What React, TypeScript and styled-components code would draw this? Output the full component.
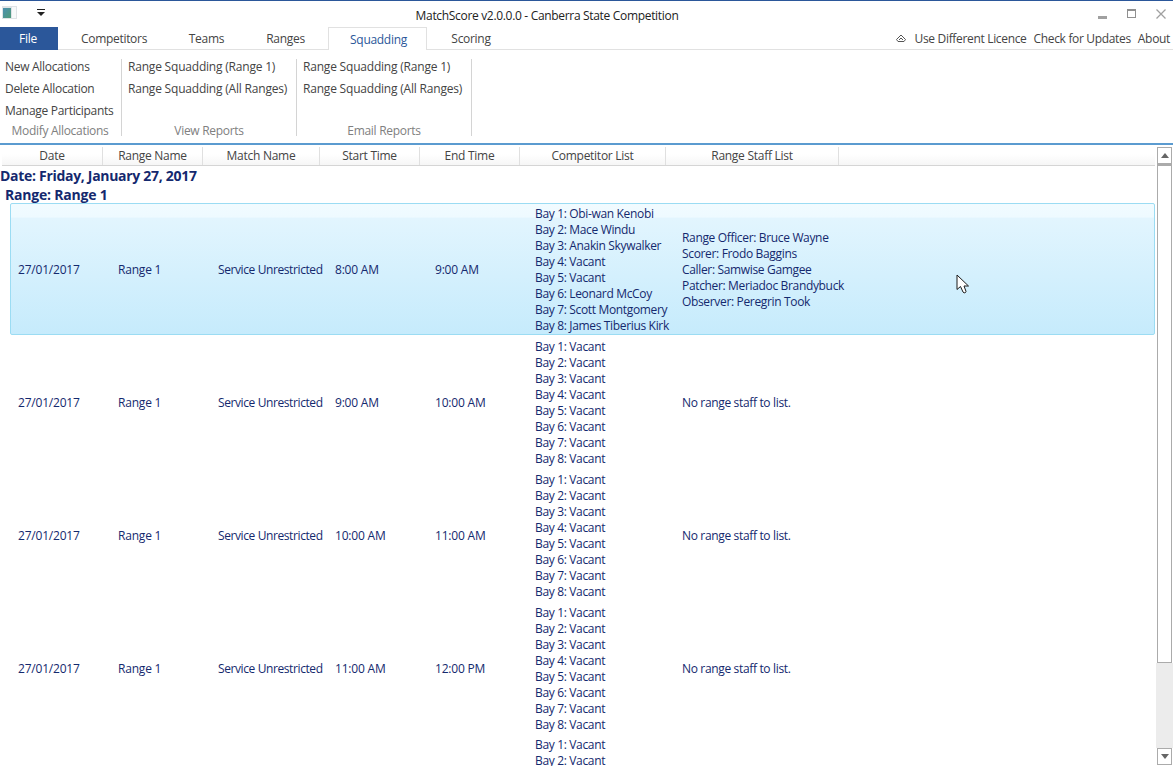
import React from 'react';
import styled, { createGlobalStyle } from 'styled-components';

const GlobalStyle = createGlobalStyle`
  html, body {
    margin: 0;
    padding: 0;
    height: 100%;
    overflow: hidden;
    background: #fff;
  }
  body {
    font-family: "Open Sans", "Noto Sans", "Liberation Sans", sans-serif;
    font-size: 12px;
    color: #444;
  }
`;

const Window = styled.div`
  position: relative;
  height: 766px;
  border-top: 1px solid #2b579a;
  box-sizing: border-box;
  display: flex;
  flex-direction: column;
  overflow: hidden;
`;

const TitleBar = styled.div`
  height: 26px;
  flex: none;
  display: grid;
  grid-template-columns: 300px 494px 1fr;
  align-items: center;
`;

const QuickAccess = styled.div`
  display: flex;
  align-items: center;
  gap: 20px;
  padding-left: 2px;
  padding-bottom: 3px;
`;

const Title = styled.div`
  text-align: center;
  font-size: 12px;
  color: #222;
  letter-spacing: -0.32px;
  padding-top: 3px;
  white-space: nowrap;
`;

const WindowButtons = styled.div`
  display: flex;
  justify-content: flex-end;
  align-items: center;
  gap: 19px;
  padding-right: 7px;
  padding-bottom: 1px;
`;

const TabStrip = styled.div`
  height: 23px;
  flex: none;
  box-sizing: border-box;
  display: flex;
  align-items: flex-start;
  border-bottom: 1px solid #e1e1e1;
`;

const FileTab = styled.div`
  width: 58px;
  height: 23px;
  padding-right: 2px;
  box-sizing: border-box;
  background: #2b579a;
  color: #fff;
  display: flex;
  align-items: center;
  justify-content: center;
  letter-spacing: -0.2px;
`;

const Tab = styled.div<{ $width: number; $active?: boolean }>`
  width: ${(props) => props.$width}px;
  box-sizing: border-box;
  height: ${(props) => (props.$active ? 23 : 22)}px;
  line-height: 23px;
  text-align: center;
  letter-spacing: -0.3px;
  padding-left: ${(props) => (props.$active ? 2 : 0)}px;
  color: ${(props) => (props.$active ? '#2b579a' : '#444')};
  background: #fff;
  border: ${(props) => (props.$active ? '1px solid #e1e1e1' : 'none')};
  border-bottom: none;
`;

const TabLinks = styled.div`
  margin-left: auto;
  height: 22px;
  display: flex;
  align-items: center;
  gap: 7px;
  padding-right: 3px;
  letter-spacing: -0.33px;
`;

const TabLink = styled.span<{ $gapLeft?: number }>`
  margin-left: ${(props) => props.$gapLeft ?? 0}px;
`;

const Ribbon = styled.div`
  height: 95px;
  flex: none;
  box-sizing: border-box;
  display: flex;
  padding-top: 9px;
  border-bottom: 2px solid #5b9bd0;
`;

const RibbonGroup = styled.div<{ $width: number }>`
  width: ${(props) => props.$width}px;
  height: 77px;
  box-sizing: border-box;
  border-right: 1px solid #d4d4d4;
  display: flex;
  flex-direction: column;
  padding-left: ${(props) => (props.$width > 160 ? 6 : 5)}px;
`;

const RibbonItems = styled.div`
  flex: 1;
  min-height: 0;
  display: flex;
  flex-direction: column;
`;

const RibbonItem = styled.div<{ $tight?: boolean }>`
  flex: none;
  height: 22px;
  line-height: 16px;
  letter-spacing: ${(props) => (props.$tight ? -0.3 : -0.2)}px;
  white-space: nowrap;
`;

const RibbonLabel = styled.div`
  text-align: center;
  color: #808080;
  letter-spacing: -0.3px;
  padding-right: 6px;
  line-height: 16px;
  margin-bottom: -3px;
`;

const Main = styled.div`
  flex: 1;
  min-height: 0;
  display: flex;
  padding-top: 2px;
`;

const ListArea = styled.div`
  flex: 1;
  min-width: 0;
  overflow: hidden;
  color: #14296e;
`;

const HeaderRow = styled.div`
  height: 19px;
  display: flex;
  box-sizing: border-box;
  background: linear-gradient(#ffffff, #ffffff 40%, #f6f6f6);
  border-bottom: 1px solid #d5d5d5;
  margin-left: 2px;
  margin-right: 1px;
  color: #444;
`;

const HeaderCell = styled.div<{ $width: number }>`
  width: ${(props) => props.$width}px;
  box-sizing: border-box;
  border-right: 1px solid #e0e0e0;
  text-align: center;
  line-height: 18px;
  letter-spacing: -0.27px;
`;

const DateHeading = styled.div`
  font-weight: 700;
  font-size: 14px;
  height: 19px;
  line-height: 20px;
  padding-left: 0;
  letter-spacing: -0.3px;
`;

const RangeHeading = styled(DateHeading)`
  height: 18px;
  padding-left: 5px;
  letter-spacing: -0.2px;
`;

const Row = styled.div<{ $selected?: boolean }>`
  height: ${(props) => (props.$selected ? 132 : 132.67)}px;
  box-sizing: border-box;
  display: grid;
  grid-template-columns: 100px 100px 117px 100px 100px 147px 1fr;
  align-items: center;
  margin: ${(props) => (props.$selected ? '0 1px 0 10px' : '0')};
  padding-left: ${(props) => (props.$selected ? 7 : 18)}px;
  padding-top: ${(props) => (props.$selected ? 2 : 4)}px;
  border: ${(props) => (props.$selected ? '1px solid #9bdcf3' : 'none')};
  border-radius: 2px;
  background: ${(props) =>
    props.$selected ? 'linear-gradient(#f1fbff, #eefaff 10%, #e2f5fe 11%, #c6ebfc)' : 'transparent'};
`;

const Cell = styled.div<{ $tight?: boolean }>`
  padding-bottom: 1px;
  letter-spacing: ${(props) => (props.$tight ? -0.4 : -0.2)}px;
  white-space: nowrap;
`;

const Line = styled.div`
  height: 16px;
  line-height: 16px;
  letter-spacing: -0.34px;
  white-space: nowrap;
`;

const ScrollBar = styled.div`
  width: 17px;
  flex: none;
  box-sizing: border-box;
  display: flex;
  flex-direction: column;
  align-items: stretch;
  padding: 0 1px 1px;
`;

const ScrollButton = styled.div`
  height: 17px;
  flex: none;
  box-sizing: border-box;
  border: 1px solid #ababab;
  background: #fff;
  display: flex;
  align-items: center;
  justify-content: center;
`;

const ScrollThumb = styled.div`
  height: 499px;
  flex: none;
  box-sizing: border-box;
  border: 1px solid #ababab;
  border-top-width: 2px;
  background: #fff;
`;

const ScrollSpace = styled.div`
  flex: 1;
  margin: 0 -1px;
  background: #ececec;
`;

const Cursor = styled.svg`
  position: absolute;
  left: 956px;
  top: 273px;
`;

const Arrow = ({ up }: { up?: boolean }) => (
  <svg width="8" height="5" viewBox="0 0 8 5">
    <path d={up ? 'M0 5 L4 0 L8 5 Z' : 'M0 0 L8 0 L4 5 Z'} fill="#666" />
  </svg>
);

const columns = [
  { name: 'Date', width: 101 },
  { name: 'Range Name', width: 100 },
  { name: 'Match Name', width: 117 },
  { name: 'Start Time', width: 100 },
  { name: 'End Time', width: 100 },
  { name: 'Competitor List', width: 146 },
  { name: 'Range Staff List', width: 173 },
];

const vacantBays = Array.from({ length: 8 }, (_, i) => `Bay ${i + 1}: Vacant`);

const rows = [
  {
    start: '8:00 AM',
    end: '9:00 AM',
    bays: [
      'Bay 1: Obi-wan Kenobi',
      'Bay 2: Mace Windu',
      'Bay 3: Anakin Skywalker',
      'Bay 4: Vacant',
      'Bay 5: Vacant',
      'Bay 6: Leonard McCoy',
      'Bay 7: Scott Montgomery',
      'Bay 8: James Tiberius Kirk',
    ],
    staff: [
      'Range Officer: Bruce Wayne',
      'Scorer: Frodo Baggins',
      'Caller: Samwise Gamgee',
      'Patcher: Meriadoc Brandybuck',
      'Observer: Peregrin Took',
    ],
  },
  { start: '9:00 AM', end: '10:00 AM', bays: vacantBays, staff: ['No range staff to list.'] },
  { start: '10:00 AM', end: '11:00 AM', bays: vacantBays, staff: ['No range staff to list.'] },
  { start: '11:00 AM', end: '12:00 PM', bays: vacantBays, staff: ['No range staff to list.'] },
  { start: '12:00 PM', end: '1:00 PM', bays: vacantBays, staff: ['No range staff to list.'] },
];

const App: React.FC = () => {
  return (
    <Window>
      <GlobalStyle />
      <TitleBar>
        <QuickAccess>
          <svg width="15" height="13" viewBox="0 0 15 13">
            <defs>
              <linearGradient id="appIcon" x1="0" y1="0" x2="1" y2="1">
                <stop offset="0" stopColor="#4a8fb0" />
                <stop offset="1" stopColor="#4f9a78" />
              </linearGradient>
            </defs>
            <rect x="0" y="0" width="15" height="13" fill="#dfe3e6" />
            <rect x="1" y="2" width="8" height="10" fill="url(#appIcon)" />
            <rect x="10" y="1" width="4" height="11" fill="#f7f9fa" />
          </svg>
          <svg width="8" height="7" viewBox="0 0 8 7">
            <rect x="0" y="0" width="8" height="1" fill="#222" />
            <path d="M0 3 L8 3 L4 7 Z" fill="#222" />
          </svg>
        </QuickAccess>
        <Title>MatchScore v2.0.0.0 - Canberra State Competition</Title>
        <WindowButtons>
          <svg width="10" height="10" viewBox="0 0 10 10">
            <rect x="0" y="7" width="9" height="3" fill="#a0a0a0" />
          </svg>
          <svg width="10" height="10" viewBox="0 0 10 10">
            <rect x="0.5" y="0.5" width="8" height="8" fill="none" stroke="#909090" />
            <rect x="0" y="0" width="9" height="2" fill="#909090" />
          </svg>
          <svg width="10" height="10" viewBox="0 0 10 10">
            <path d="M0.5 0.5 L9.5 9.5 M9.5 0.5 L0.5 9.5" stroke="#a0a0a0" strokeWidth="1.3" />
          </svg>
        </WindowButtons>
      </TitleBar>

      <TabStrip>
        <FileTab>File</FileTab>
        <Tab $width={112}>Competitors</Tab>
        <Tab $width={73}>Teams</Tab>
        <Tab $width={85}>Ranges</Tab>
        <Tab $width={99} $active>Squadding</Tab>
        <Tab $width={88}>Scoring</Tab>
        <TabLinks>
          <svg width="10" height="8" viewBox="0 0 10 8">
            <path d="M0.5 5.5 L5 1 L9.5 5.5 L8 7.5 L2 7.5 Z M3 6 L5 4 L7 6" fill="none" stroke="#555" />
          </svg>
          <TabLink $gapLeft={2}>Use Different Licence</TabLink>
          <TabLink>Check for Updates</TabLink>
          <TabLink>About</TabLink>
        </TabLinks>
      </TabStrip>

      <Ribbon>
        <RibbonGroup $width={122}>
          <RibbonItems>
            <RibbonItem $tight>New Allocations</RibbonItem>
            <RibbonItem $tight>Delete Allocation</RibbonItem>
            <RibbonItem $tight>Manage Participants</RibbonItem>
          </RibbonItems>
          <RibbonLabel>Modify Allocations</RibbonLabel>
        </RibbonGroup>
        <RibbonGroup $width={175}>
          <RibbonItems>
            <RibbonItem>Range Squadding (Range 1)</RibbonItem>
            <RibbonItem>Range Squadding (All Ranges)</RibbonItem>
          </RibbonItems>
          <RibbonLabel>View Reports</RibbonLabel>
        </RibbonGroup>
        <RibbonGroup $width={175}>
          <RibbonItems>
            <RibbonItem>Range Squadding (Range 1)</RibbonItem>
            <RibbonItem>Range Squadding (All Ranges)</RibbonItem>
          </RibbonItems>
          <RibbonLabel>Email Reports</RibbonLabel>
        </RibbonGroup>
      </Ribbon>

      <Main>
        <ListArea>
          <HeaderRow>
            {columns.map((col) => (
              <HeaderCell key={col.name} $width={col.width}>{col.name}</HeaderCell>
            ))}
          </HeaderRow>
          <DateHeading>Date: Friday, January 27, 2017</DateHeading>
          <RangeHeading>Range: Range 1</RangeHeading>
          {rows.map((row, i) => (
            <Row key={row.start} $selected={i === 0}>
              <Cell>27/01/2017</Cell>
              <Cell>Range 1</Cell>
              <Cell $tight>Service Unrestricted</Cell>
              <Cell>{row.start}</Cell>
              <Cell>{row.end}</Cell>
              <div>
                {row.bays.map((bay) => <Line key={bay}>{bay}</Line>)}
              </div>
              <div>
                {row.staff.map((s) => <Line key={s}>{s}</Line>)}
              </div>
            </Row>
          ))}
        </ListArea>
        <ScrollBar>
          <ScrollButton><Arrow up /></ScrollButton>
          <ScrollThumb />
          <ScrollSpace />
          <ScrollButton><Arrow /></ScrollButton>
        </ScrollBar>
      </Main>

      <Cursor width="13" height="20" viewBox="0 0 13 20">
        <path
          d="M1 1 L1 15.5 L4.5 12.5 L7 18 Q8 19.5 9.5 18.5 Q10.5 17.5 9.5 16 L8 12 L12.5 12 Z"
          fill="#fff"
          stroke="#1a1a1a"
          strokeWidth="1"
        />
      </Cursor>
    </Window>
  );
};

export default App;
